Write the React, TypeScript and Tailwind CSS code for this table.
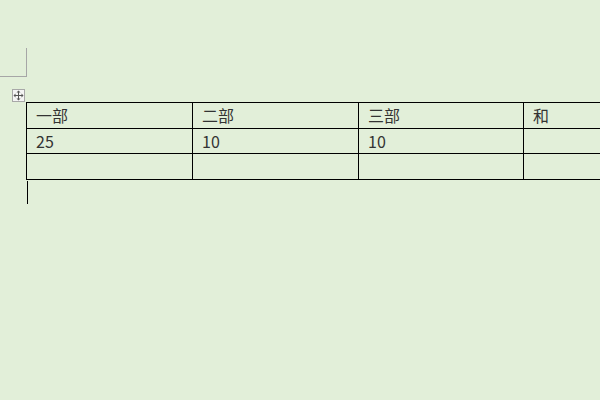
import React from "react";

const rows = [
  ["一部", "二部", "三部", "和"],
  ["25", "10", "10", ""],
  ["", "", "", ""],
];

const widths = ["w-[166px]", "w-[166px]", "w-[165px]", "w-[166px]"];
const heights = ["h-[26px]", "h-[25px]", "h-[26px]"];

const MoveHandle = () => (
  <div className="w-[13px] h-[13px] border border-[#a8a8a8] bg-[#f4f4f4] flex items-center justify-center">
    <svg width="11" height="11" viewBox="0 0 11 11" fill="none">
      <path d="M5.5 1v9M1 5.5h9" stroke="#555" strokeWidth="1" />
      <path d="M5.5 0.5l-2 2h4zM5.5 10.5l-2-2h4zM0.5 5.5l2-2v4zM10.5 5.5l-2-2v4z" fill="#555" />
    </svg>
  </div>
);

const App = () => {
  return (
    <div className="w-[600px] h-[400px] overflow-hidden bg-[#e2efd9] font-['Noto_Sans_CJK_SC',sans-serif] text-[#333333]">
      {/* page corner mark */}
      <div className="mt-[48px] w-[27px] h-[29px] border-r border-b border-[#a6a6a6]" />

      <div className="pl-[12px] pt-[12px]">
        <MoveHandle />
      </div>

      <div className="ml-[26px] w-[700px] border-b border-black">
        {rows.map((row, r) => (
          <div key={r} className="flex">
            {row.map((cell, c) => (
              <div
                key={c}
                className={`${widths[c]} ${heights[r]} shrink-0 border-l border-t border-black pl-[9px] pt-[2px] text-[16px] leading-[20px]`}
              >
                {cell}
              </div>
            ))}
          </div>
        ))}
      </div>

      {/* text cursor */}
      <div className="ml-[27px] mt-[1px] w-px h-[23px] bg-black" />
    </div>
  );
};

export default App;
